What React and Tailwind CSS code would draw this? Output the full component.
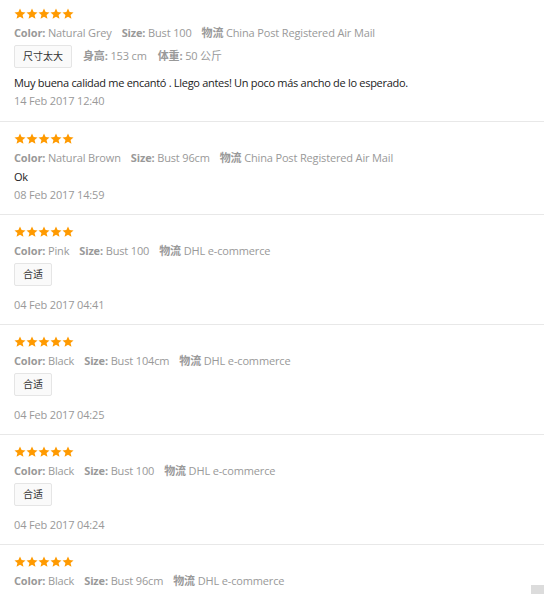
import React from 'react';

const reviews = [
  {
    color: 'Natural Grey', size: 'Bust 100', ship: 'China Post Registered Air Mail',
    tag: '尺寸太大', extra: [['身高', '153 cm'], ['体重', '50 公斤']],
    text: 'Muy buena calidad me encantó . Llego antes! Un poco más ancho de lo esperado.',
    date: '14 Feb 2017 12:40',
  },
  { color: 'Natural Brown', size: 'Bust 96cm', ship: 'China Post Registered Air Mail', text: 'Ok', date: '08 Feb 2017 14:59' },
  { color: 'Pink', size: 'Bust 100', ship: 'DHL e-commerce', tag: '合适', date: '04 Feb 2017 04:41' },
  { color: 'Black', size: 'Bust 104cm', ship: 'DHL e-commerce', tag: '合适', date: '04 Feb 2017 04:25' },
  { color: 'Black', size: 'Bust 100', ship: 'DHL e-commerce', tag: '合适', date: '04 Feb 2017 04:24' },
  { color: 'Black', size: 'Bust 96cm', ship: 'DHL e-commerce' },
];

function Star() {
  return (
    <svg width="12" height="12" viewBox="0 0 24 24" fill="#ff9a00">
      <path d="M12 1l3.2 7.2 7.8.7-5.9 5.1 1.8 7.7L12 17.6l-6.9 4.1 1.8-7.7L1 8.9l7.8-.7z" />
    </svg>
  );
}

function Meta({ label, value }) {
  return (
    <span className="mr-[10px]">
      <span className="font-bold">{label}</span> {value}
    </span>
  );
}

function Review({ r, first }) {
  return (
    <div className={`px-[14px] border-b border-[#e8e8e8] ${first ? 'pt-[8px] pb-[11px]' : 'pt-[11px] pb-[10px]'}`}>
      <div className="flex h-[12px]">
        {[0, 1, 2, 3, 4].map((i) => <Star key={i} />)}
      </div>

      <div className="mt-[4px] leading-[18px] text-[#999] whitespace-nowrap tracking-[-0.15px]">
        <Meta label="Color:" value={r.color} />
        <Meta label="Size:" value={r.size} />
        <Meta label="物流" value={r.ship} />
      </div>

      {r.tag && (
        <div className="mt-[3px] flex items-center">
          <span className="h-[23px] px-[8px] flex items-center border border-[#e5e5e5] bg-[#fafafa] rounded-[2px] text-[#333] text-[10px]">
            {r.tag}
          </span>
          {r.extra?.map(([k, v]) => (
            <span key={k} className="ml-[11px] text-[#999] tracking-[-0.15px]">
              <span className="font-bold">{k}:</span> {v}
            </span>
          ))}
        </div>
      )}

      {r.text && (
        <div className={`leading-[18px] text-[#222] tracking-[-0.3px] ${r.tag ? 'mt-[6px]' : 'mt-[1px]'}`}>{r.text}</div>
      )}

      {r.date && (
        <div className={`leading-[18px] text-[#999] tracking-[-0.15px] ${!r.text && r.tag ? 'mt-[10px]' : ''}`}>{r.date}</div>
      )}
    </div>
  );
}

export default function App() {
  return (
    <div className="relative w-[544px] h-[594px] overflow-hidden bg-white text-[11px] font-['Open_Sans','Noto_Sans_CJK_SC',sans-serif]">
      {reviews.map((r, i) => <Review key={i} r={r} first={i === 0} />)}
      <div className="absolute right-0 bottom-0 w-[13px] h-[9px] bg-[#dcdcdc]" />
    </div>
  );
}
